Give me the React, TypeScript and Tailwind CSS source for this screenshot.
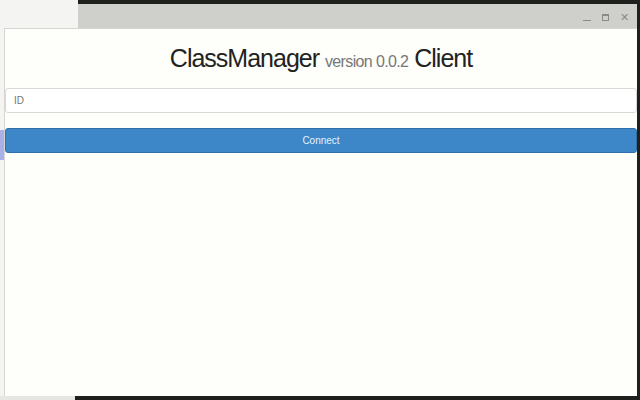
export default function App() {
  return (
    <div className="w-[640px] h-[400px] overflow-hidden flex flex-col bg-[#f3f3f1] font-['Liberation_Sans',Arial,sans-serif]">
      {/* top: desktop strip + title bar */}
      <div className="flex h-[28px] shrink-0">
        <div className="w-[78px] bg-[#f4f4f3]" />
        <div className="flex-1 flex flex-col">
          <div className="h-[4px] bg-[#1e201d]" />
          <div className="flex-1 bg-[#cfd0cc] flex items-center justify-end gap-[11px] pr-[8px] pt-[2px]">
            <span className="w-[8px] h-[1px] bg-[#8a8b87] mt-[7px]" />
            <span className="w-[7px] h-[7px] border border-[#8a8b87] border-t-2" />
            <span className="text-[11px] leading-none text-[#8a8b87]">✕</span>
          </div>
        </div>
        <div className="w-[3px] bg-[#1e201d]" />
      </div>

      {/* window body */}
      <div className="flex flex-1 min-h-0">
        <div className="w-[4px] flex flex-col">
          <div className="h-[102px] bg-[#f4f4f3]" />
          <div className="h-[30px] bg-[#aab0e8]" />
          <div className="flex-1 bg-[#f4f4f3]" />
        </div>
        <div className="flex-1 flex flex-col bg-[#fefefa] border-t border-l border-[#d6d6d2]">
          <h1 className="text-center pt-[13px] h-[59px] text-[#222] text-[25px] leading-[32px] tracking-[-0.04em]">
            ClassManager{' '}
            <span className="text-[16px] text-[#777] tracking-[-0.04em]">version 0.0.2</span> Client
          </h1>
          <input
            placeholder="ID"
            className="h-[25px] mx-0 px-[8px] text-[10px] text-[#555] placeholder:text-[#777] bg-white border border-[#d9d9d6] rounded-[3px] outline-none"
          />
          <button className="mt-[15px] h-[25px] bg-[#3d86c8] border border-[#2f6faa] rounded-[3px] text-[10px] text-[#e6f2ff]">
            Connect
          </button>
        </div>
        <div className="w-[3px] bg-[#1e201d]" />
      </div>

      {/* bottom desktop strip */}
      <div className="flex h-[4px] shrink-0">
        <div className="w-[75px] bg-[#e6e6e3]" />
        <div className="flex-1 bg-[#1e201d]" />
      </div>
    </div>
  )
}
